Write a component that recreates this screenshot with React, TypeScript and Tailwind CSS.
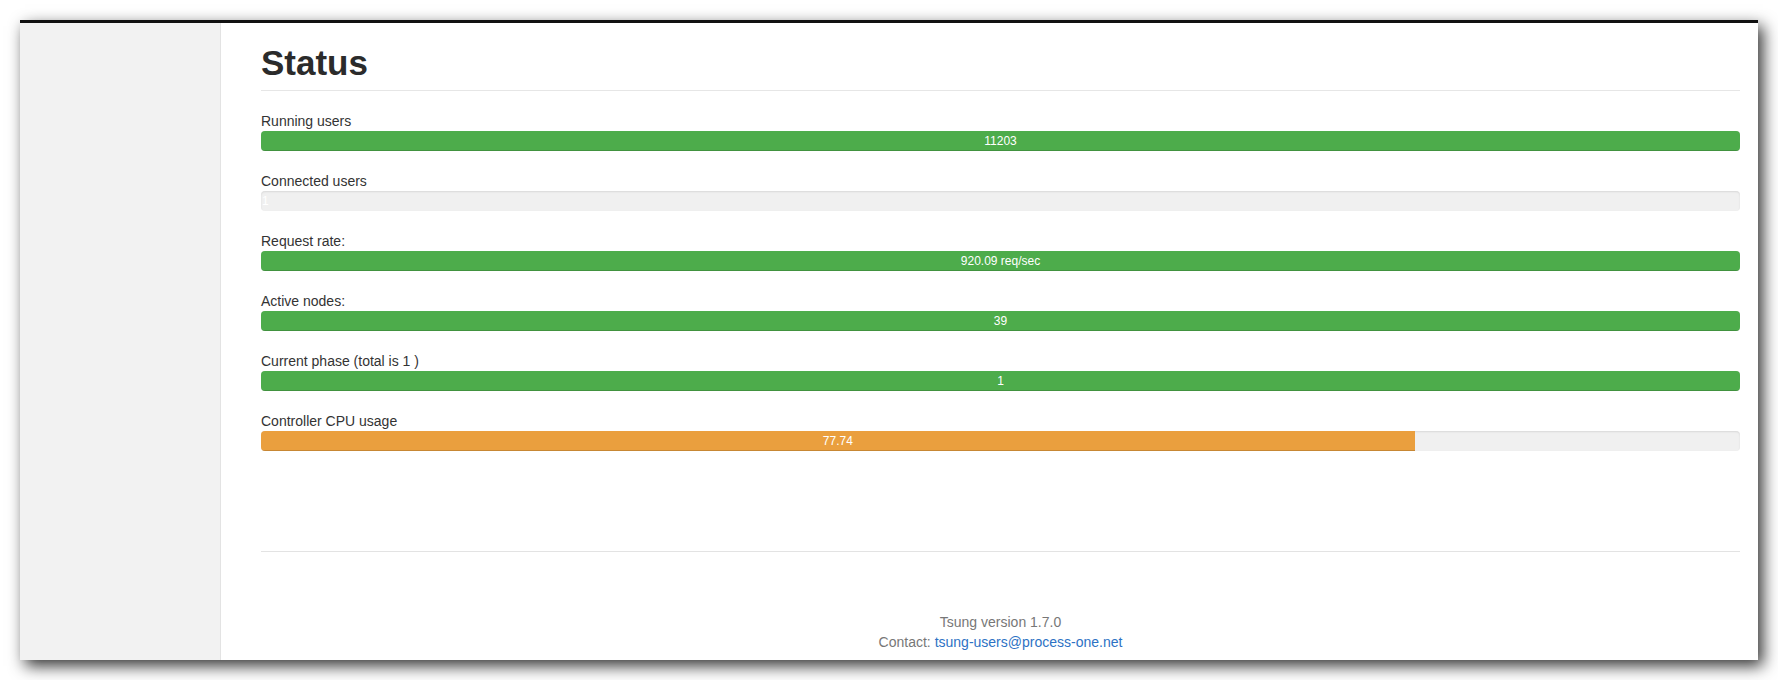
import React from "react"

type Row = {
  label: string
  value: string
  pct: number
  color: "green" | "orange"
}

const rows: Row[] = [
  { label: "Running users", value: "11203", pct: 100, color: "green" },
  { label: "Connected users", value: "1", pct: 0, color: "green" },
  { label: "Request rate:", value: "920.09 req/sec", pct: 100, color: "green" },
  { label: "Active nodes:", value: "39", pct: 100, color: "green" },
  { label: "Current phase (total is 1 )", value: "1", pct: 100, color: "green" },
  { label: "Controller CPU usage", value: "77.74", pct: 78, color: "orange" },
]

function ProgressRow({ row }: { row: Row }) {
  const barColor = row.color === "green" ? "bg-[#4dac4b]" : "bg-[#ea9f3e]"
  return (
    <div className="mb-5">
      <div className="text-[14px] leading-5 text-[#333]">{row.label}</div>
      <div className="relative h-5 w-full overflow-hidden rounded-[4px] bg-[#f0f0f0] shadow-[inset_0_1px_2px_rgba(0,0,0,0.1)]">
        {row.pct > 0 ? (
          <div
            className={`h-full ${barColor} text-center text-[12px] leading-5 text-white shadow-[inset_0_-1px_0_rgba(0,0,0,0.15)]`}
            style={{ width: `${row.pct}%` }}
          >
            {row.value}
          </div>
        ) : (
          <span className="absolute left-[1px] top-0 text-[12px] leading-5 text-white">{row.value}</span>
        )}
      </div>
    </div>
  )
}

export default function App() {
  return (
    <div className="h-[680px] w-[1778px] bg-white p-5 font-['Liberation_Sans',Arial,sans-serif]">
      <div className="flex h-[640px] w-[1738px] flex-col border-t-[3px] border-[#111] bg-white shadow-[5px_6px_15px_rgba(0,0,0,0.8)]">
        <div className="flex min-h-0 flex-1">
          {/* sidebar */}
          <div className="w-[201px] shrink-0 border-r border-[#e3e3e3] bg-[#f2f2f2]"></div>

          {/* main */}
          <div className="flex flex-1 flex-col pl-10 pr-[18px]">
            <h1 className="mt-5 border-b border-[#e6e6e6] pb-[7px] text-[35px] font-bold leading-10 text-[#2b2b2b]">
              Status
            </h1>

            <div className="mt-5">
              {rows.map((r) => (
                <ProgressRow key={r.label} row={r} />
              ))}
            </div>

            <div className="mt-[80px] border-t border-[#e3e3e3]"></div>

            <div className="mt-[60px] text-center text-[14px] leading-5 text-[#777]">
              <div>Tsung version 1.7.0</div>
              <div>
                Contact: <a className="text-[#2d72c4]">tsung-users@process-one.net</a>
              </div>
            </div>
          </div>
        </div>
      </div>
    </div>
  )
}
